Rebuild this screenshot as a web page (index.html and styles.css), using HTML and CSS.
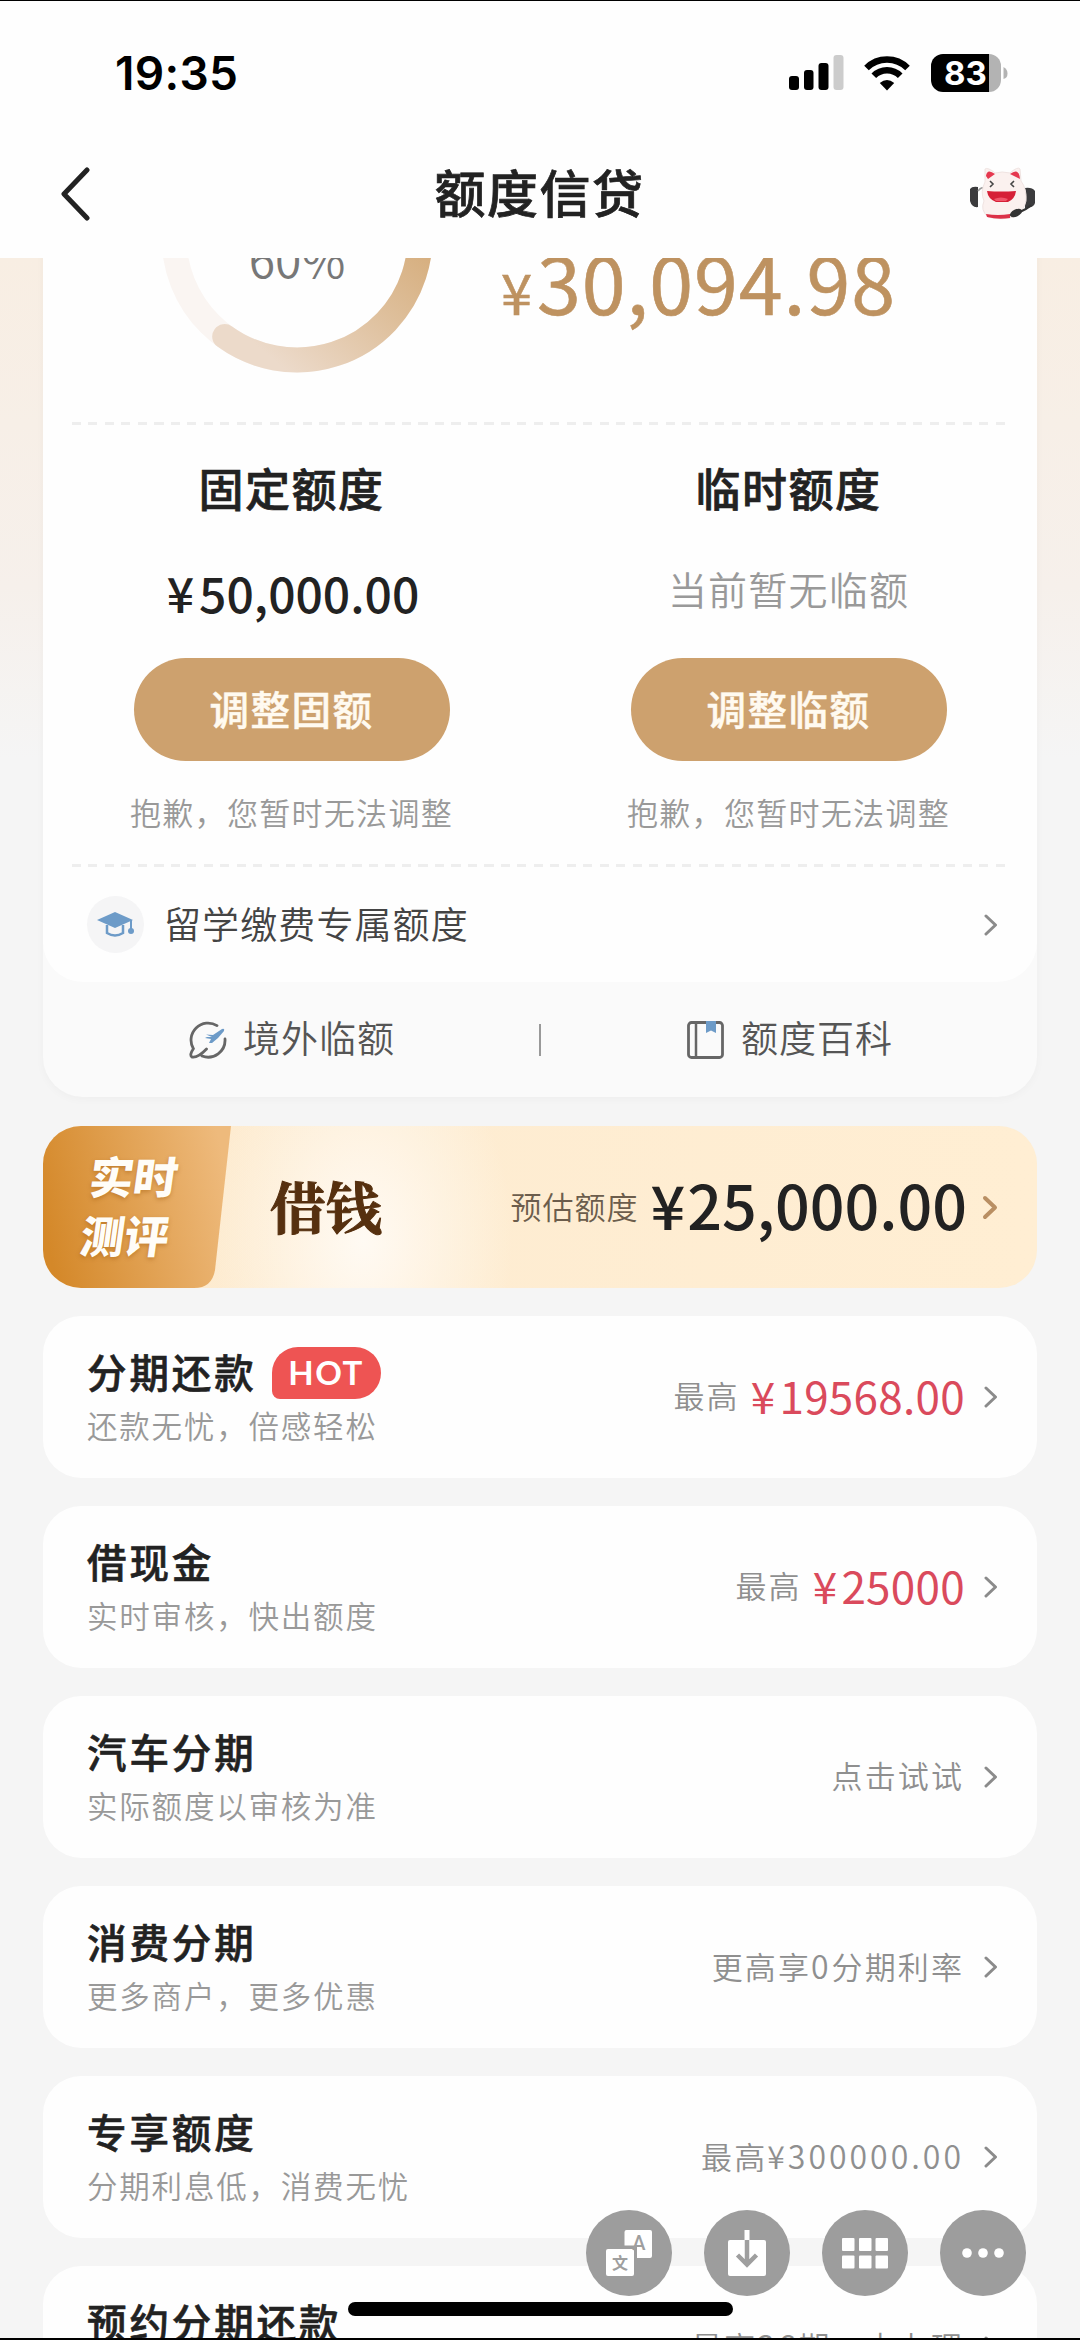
FILE: index.html
```html
<!DOCTYPE html>
<html lang="zh-CN">
<head>
<meta charset="utf-8">
<title>额度信贷</title>
<link rel="stylesheet" href="styles.css">
</head>
<body>
<svg width="0" height="0" class="defs">
  <symbol id="chevron" viewBox="0 0 14 22"><path d="M2 2 L11.5 11 L2 20" fill="none" stroke="currentColor" stroke-width="3" stroke-linecap="round" stroke-linejoin="round"/></symbol>
</svg>
<div class="screen">
  <header class="top">
    <div class="status">
      <span class="time">19:35</span>
      <div class="status-icons">
        <svg width="55" height="36" viewBox="0 0 55 36">
          <rect x="0" y="21" width="10" height="14" rx="3"/><rect x="15" y="15" width="9.500" height="20" rx="3"/><rect x="29.500" y="8" width="10" height="27" rx="3"/><rect x="44.500" y="0" width="10" height="35" rx="3" fill="#ccc"/>
        </svg>
        <svg class="wifi" width="46" height="36" viewBox="0 0 46 36">
          <path d="M2.500 13 A29 29 0 0 1 43.500 13" fill="none" stroke="#000" stroke-width="6.500"/>
          <path d="M9.800 20.800 A18.500 18.500 0 0 1 36.200 20.800" fill="none" stroke="#000" stroke-width="6.500"/>
          <path d="M23 35.500 L15.800 28 Q23 22 30.200 28 Z"/>
        </svg>
        <svg class="battery" width="77" height="38" viewBox="0 0 77 38">
          <path d="M12 0H58V38H12A12 12 0 0 1 0 26V12A12 12 0 0 1 12 0Z"/>
          <path d="M58 0A12 12 0 0 1 70 12V26A12 12 0 0 1 58 38Z" fill="#b3b3b3"/>
          <path d="M72.500 13Q76.500 15 76.500 19.500T72.500 25Z" fill="#b3b3b3"/>
          <text x="34.500" y="31" text-anchor="middle" class="battery-text">83</text>
        </svg>
      </div>
    </div>
    <nav class="nav">
      <svg class="back" width="32" height="54" viewBox="0 0 32 54"><path d="M28 3 L5 27 L28 51" fill="none" stroke="#222" stroke-width="5" stroke-linecap="round" stroke-linejoin="round"/></svg>
      <h1>额度信贷</h1>
      <svg class="mascot" width="66" height="54" viewBox="0 0 66 54">
        <path d="M0 22Q2 19 8 20V40Q2 41 0 34ZM55 21Q62 20 65 24V36Q64 41 55 41Z" fill="#3b3b3d"/>
        <path d="M8 24Q12 19 14 22L15 28M55 24L50 22" stroke="#999" stroke-width="1.500" fill="none"/>
        <path d="M15 2Q18 0 25 6Q32 4 40 6Q48-1 50 2L51 14Q57 22 56 34Q54 43 47 49Q32 54 18 50Q10 43 14 34Q10 25 15 15Z" fill="#fbf1ef" stroke="#f0e4e2" stroke-width="1"/>
        <path d="M16 9Q17 1 25 7L18 12ZM40 7Q49 0 50 12Z" fill="#e5384f"/>
        <path d="M20 14L23 17L20 20M44 14L41 17L44 20" fill="none" stroke="#444" stroke-width="1.600"/>
        <path d="M17 24Q31 25 46 24Q45 32 38 35H26Q18 32 17 24Z" fill="#d62037"/><path d="M24 32Q31 29 38 32L36 34H26Z" fill="#f0566a"/>
        <path d="M16 47Q28 49 40 47V51Q28 53 17 50Z" fill="#dc3148"/>
        <path d="M61 38Q56 43 49 45" fill="none" stroke="#333" stroke-width="2.200"/><ellipse cx="46" cy="46" rx="6.500" ry="3.600" transform="rotate(-25 46 46)" fill="#333"/>
      </svg>
    </nav>
  </header>

  <main class="page">
    <section class="quota">
      <div class="quota-main">
        <div class="summary">
          <svg class="ring" width="272" height="272" viewBox="0 0 272 272">
            <defs><linearGradient id="arc" x1="0.800" y1="0.200" x2="0.250" y2="1"><stop offset="0" stop-color="#d2a670"/><stop offset="0.500" stop-color="#debf9b"/><stop offset="1" stop-color="#ecdaca"/></linearGradient></defs>
            <circle cx="136" cy="136" r="123" fill="none" stroke="#faf5f2" stroke-width="25"/>
            <path d="M136 13 A123 123 0 1 1 63.700 235.500" fill="none" stroke="url(#arc)" stroke-width="25" stroke-linecap="round"/>
            <text x="136" y="177" text-anchor="middle" class="ring-text">60%</text>
          </svg>
          <div class="available"><small>¥</small>30,094.98</div>
        </div>
        <div class="dash"></div>
        <div class="limits">
          <div class="limit">
            <h2>固定额度</h2>
            <div class="value money"><i>¥</i>50,000.00</div>
            <button>调整固额</button>
            <p>抱歉，您暂时无法调整</p>
          </div>
          <div class="limit">
            <h2>临时额度</h2>
            <div class="value empty">当前暂无临额</div>
            <button>调整临额</button>
            <p>抱歉，您暂时无法调整</p>
          </div>
        </div>
        <div class="dash"></div>
        <a class="study">
          <span class="study-icon"><svg width="38" height="26" viewBox="0 0 38 26"><path d="M0 8L18 0L36 8L18 16Z" fill="#6d9bc8"/><path d="M10 13V21Q18 26 26 21V13" fill="none" stroke="#6d9bc8" stroke-width="2.500"/><path d="M34 8V18" stroke="#6d9bc8" stroke-width="2"/><circle cx="34" cy="19" r="3" fill="#6d9bc8"/></svg></span>
          <span class="study-text">留学缴费专属额度</span>
          <svg class="chev" width="14" height="22"><use href="#chevron"/></svg>
        </a>
      </div>
      <div class="quota-links">
        <a><svg width="38" height="38" viewBox="0 0 38 38"><path d="M28 4.600 A17 17 0 0 0 4.400 27.700 M36 18 A17 17 0 0 1 13 35 M4.400 27.700Q0 34 3 36Q9 37 17.500 28" fill="none" stroke="#666" stroke-width="2.800" stroke-linecap="round"/><path d="M17 13.500L24 14L33 8Q36 7 35 10L29 17L23 22H20L22 18L16 17L18 16H23Z" fill="#6d9bc8"/></svg><span>境外临额</span></a>
        <i></i>
        <a><svg width="38" height="38" viewBox="0 0 38 38"><rect x="1.500" y="1.500" width="34" height="35" rx="3" fill="none" stroke="#666" stroke-width="2.800"/><path d="M9 2V36" stroke="#666" stroke-width="2.500"/><path d="M19 0H29V12L24 9.500L19 12Z" fill="#6d9bc8"/></svg><span>额度百科</span></a>
      </div>
    </section>

    <a class="banner">
      <div class="tag">
        <svg class="tag-bg" width="188" height="162" viewBox="0 0 188 162"><defs><linearGradient id="tag" x1="0" y1="0.600" x2="1" y2="0.400"><stop offset="0" stop-color="#d48829"/><stop offset="1" stop-color="#eeba7c"/></linearGradient></defs><path d="M0 0H188L172 144Q169 162 151 162H0Z" fill="url(#tag)"/></svg>
        <span>实时</span><span>测评</span>
      </div>
      <strong>借钱</strong>
      <span class="estimate">预估额度</span>
      <span class="estimate-value"><i>¥</i>25,000.00</span>
      <svg class="chev gold" width="16" height="25" viewBox="0 0 16 25"><path d="M3 3L13 12.500L3 22" fill="none" stroke="currentColor" stroke-width="4" stroke-linecap="round" stroke-linejoin="round"/></svg>
    </a>

    <a class="item">
      <div class="item-text"><h3>分期还款<b>HOT</b></h3><p>还款无忧，倍感轻松</p></div>
      <span class="hint">最高</span><span class="price"><i>¥</i>19568.00</span>
      <svg class="chev" width="14" height="22"><use href="#chevron"/></svg>
    </a>
    <a class="item">
      <div class="item-text"><h3>借现金</h3><p>实时审核，快出额度</p></div>
      <span class="hint">最高</span><span class="price"><i>¥</i>25000</span>
      <svg class="chev" width="14" height="22"><use href="#chevron"/></svg>
    </a>
    <a class="item">
      <div class="item-text"><h3>汽车分期</h3><p>实际额度以审核为准</p></div>
      <span class="hint">点击试试</span>
      <svg class="chev" width="14" height="22"><use href="#chevron"/></svg>
    </a>
    <a class="item">
      <div class="item-text"><h3>消费分期</h3><p>更多商户，更多优惠</p></div>
      <span class="hint">更高享<span class="digits">0</span>分期利率</span>
      <svg class="chev" width="14" height="22"><use href="#chevron"/></svg>
    </a>
    <a class="item">
      <div class="item-text"><h3>专享额度</h3><p>分期利息低，消费无忧</p></div>
      <span class="hint">最高<span class="digits">¥300000.00</span></span>
      <svg class="chev" width="14" height="22"><use href="#chevron"/></svg>
    </a>
    <a class="item">
      <div class="item-text"><h3>预约分期还款</h3></div>
      <span class="hint">最高<span class="digits">36</span>期，去办理</span>
      <svg class="chev" width="14" height="22"><use href="#chevron"/></svg>
    </a>
  </main>

  <div class="tools">
    <button><svg width="46" height="46" viewBox="0 0 46 46"><path d="M20.500 0H44Q46 0 46 2V26Q46 28 44 28H31V17Q31 15.500 29 15.500H18.500V2Q18.500 0 20.500 0Z" fill="#fff"/><rect x="0" y="19" width="28" height="27" rx="2" fill="#fff"/><text x="33" y="20" text-anchor="middle" class="glyph-a">A</text><text x="14" y="38.500" text-anchor="middle" class="glyph-w">文</text></svg></button>
    <button><svg width="38" height="46" viewBox="0 0 38 46"><rect x="0" y="10" width="38" height="36" rx="2" fill="#fff"/><path d="M19 0V10" stroke="#fff" stroke-width="5"/><path d="M19 10V33M9.500 25L19 34.500L28.500 25" stroke="#9f9f9f" stroke-width="4.500" fill="none"/></svg></button>
    <button><svg width="46" height="31" viewBox="0 0 46 31" fill="#fff"><rect width="12.500" height="13" rx="1"/><rect x="17" width="12.500" height="13" rx="1"/><rect x="33.500" width="12.500" height="13" rx="1"/><rect y="17.500" width="12.500" height="13" rx="1"/><rect x="17" y="17.500" width="12.500" height="13" rx="1"/><rect x="33.500" y="17.500" width="12.500" height="13" rx="1"/></svg></button>
    <button><svg width="42" height="10" viewBox="0 0 42 10" fill="#fff"><circle cx="5" cy="5" r="4.800"/><circle cx="21" cy="5" r="4.800"/><circle cx="37" cy="5" r="4.800"/></svg></button>
  </div>
  <div class="home"></div>
</div>
</body>
</html>
```
FILE: styles.css
```css
* { box-sizing: border-box; margin: 0; padding: 0; }
body { font-family: "Noto Sans CJK SC", sans-serif; color: #222; background: #f5f5f5; }
svg { display: block; flex: none; }
i { font-style: normal; }
.defs { position: absolute; }
button { border: 0; font: inherit; }
.screen { position: relative; width: 1080px; height: 2340px; overflow: hidden; border-top: 1px solid #000; border-bottom: 2px solid #000; }

.top { position: relative; z-index: 2; height: 257px; background: #fefefe; }
.status { display: flex; align-items: center; justify-content: space-between; height: 143px; padding: 0 72px 0 115px; }
.time { font: 600 46px/60px Inter, sans-serif; color: #000; letter-spacing: 0.3px; }
.status-icons { display: flex; align-items: center; }
.wifi { margin-left: 20px; }
.battery { margin-left: 21px; }
.battery-text { font: 700 33px Inter, sans-serif; fill: #fff; }
.nav { display: flex; align-items: center; justify-content: space-between; height: 100px; padding: 0 44px 0 59px; }
.nav h1 { font-size: 51px; font-weight: 500; line-height: 70px; letter-spacing: 1.500px; margin: -6px 0 0 18px; -webkit-text-stroke: 0.700px; }

.page { display: flex; flex-direction: column; height: 2080px; padding: 0 43px; overflow: hidden; background: linear-gradient(#f8eee3, #f6f0eb 330px, #f5f5f5 500px); }
.quota { flex: none; margin-top: -160px; height: 999px; border-radius: 40px; background: #fafafa; box-shadow: 0 2px 10px rgba(0,0,0,.03); }
.quota-main { height: 884px; border-radius: 0 0 40px 40px; background: #fefefe; }
.summary { display: flex; height: 324px; padding: 3px 0 0 118px; }
.ring-text { font: 350 48px "Noto Sans CJK SC", sans-serif; fill: #777; }
.available { margin: 135px 0 0 68px; font-size: 79px; line-height: 90px; letter-spacing: 0.900px; color: #be9260; white-space: nowrap; -webkit-text-stroke: 0.600px; }
.available small { font-size: 56px; margin-right: 4px; }
.dash { height: 3px; margin: 0 29px; background: repeating-linear-gradient(90deg, #eee 0 9px, transparent 9px 16.500px); }
.limits { display: grid; grid-template-columns: 1fr 1fr; height: 439px; }
.limit { display: flex; flex-direction: column; align-items: center; padding-top: 33px; }
.limit h2 { font-size: 45px; font-weight: 500; line-height: 60px; letter-spacing: 1.500px; -webkit-text-stroke: 0.700px; }
.value { height: 140px; line-height: 140px; }
.money { padding: 4px 0 0 3px; font-size: 48px; font-weight: 500; }
.money i { margin-right: 5px; }
.empty { font-size: 39px; font-weight: 350; color: #999; letter-spacing: 1.200px; }
.limit button { width: 316px; height: 103px; border-radius: 52px; background: #cda16e; color: #fffaf0; font-size: 39.500px; font-weight: 500; line-height: 99px; letter-spacing: 1.500px; padding-bottom: 4px; -webkit-text-stroke: 0.500px; }
.limit p { font-size: 31px; font-weight: 350; line-height: 101px; letter-spacing: 1.300px; color: #999; }
.study { display: flex; align-items: center; height: 115px; padding: 0 39px 0 44px; }
.study-icon { display: grid; place-items: center; width: 57px; height: 57px; border-radius: 50%; background: #f5f5f6; }
.study-text { flex: 1; margin: -4px 0 0 20px; font-size: 37px; line-height: 60px; letter-spacing: 1.100px; font-weight: 350; color: #444; }
.chev { color: #8b8b8b; }
.quota-links { display: flex; align-items: center; height: 115px; }
.quota-links a { flex: 1; display: flex; align-items: center; justify-content: center; gap: 16px; padding-left: 2px; }
.quota-links span { font-size: 37px; font-weight: 350; line-height: 60px; letter-spacing: 1px; color: #555; margin-top: -5px; }
.quota-links i { width: 2px; height: 32px; background: #999; }

.banner, .item { flex: none; display: flex; align-items: center; height: 162px; border-radius: 38px; overflow: hidden; padding-right: 39px; }
.banner { margin: 29px 0 28px; background: radial-gradient(ellipse 150px 220px at 320px 70%, #fffaf3, rgba(255,245,230,0)), linear-gradient(90deg, #fdebd0, #ffeed3); }
.tag { position: relative; width: 188px; height: 162px; padding-top: 20px; }
.tag-bg { position: absolute; inset: 0; }
.tag span { position: relative; display: block; margin-left: 47px; font-size: 44px; font-weight: 900; line-height: 59px; color: #fffdf8; transform: skewX(-8deg); transform-origin: 0 50%; text-shadow: 0 2px 4px rgba(150,80,0,.4); }
.tag span + span { margin-left: 38px; }
.banner strong { flex: 1; margin: -5px 0 0 39px; font: 700 56px/80px "Noto Serif CJK SC", "Noto Sans CJK SC", serif; color: #56300f; -webkit-text-stroke: 1px; }
.estimate { font-size: 31px; font-weight: 350; letter-spacing: 1px; color: #6c5d4c; margin-top: -4px; }
.estimate-value { font-size: 61px; font-weight: 500; line-height: 80px; margin: -7px 15px 0 12px; }
.estimate-value i { margin-right: 2px; }
.gold { color: #b98f63; }

.item { background: #fefefe; margin-bottom: 28px; padding-left: 44px; }
.item-text { flex: 1; align-self: stretch; padding-top: 25px; }
.item h3 { display: flex; align-items: center; font-size: 39.500px; font-weight: 500; line-height: 60px; letter-spacing: 2.900px; -webkit-text-stroke: 0.600px; }
.item p { font-size: 30.500px; font-weight: 350; line-height: 48px; letter-spacing: 1.800px; color: #999; }
.item b { width: 109px; height: 52px; margin: 3px 0 0 15px; border-radius: 26px 26px 26px 8px; background: #ee5453; color: #fff; font: 700 33px/50px Lato, sans-serif; letter-spacing: 1.500px; text-align: center; -webkit-text-stroke: 0; }
.hint { font-size: 31px; font-weight: 350; letter-spacing: 2.100px; color: #8f8f8f; margin-right: 20px; margin-top: -5px; white-space: nowrap; }
.digits { font-size: 32px; letter-spacing: 3px; }
.price { font-size: 44px; line-height: 60px; color: #da4a5c; margin: -5px 19px 0 -9px; letter-spacing: 0.300px; white-space: nowrap; }
.price i { margin-right: 4px; }

.tools { position: absolute; left: 586px; top: 2209px; display: flex; gap: 32px; z-index: 3; }
.tools button { display: grid; place-items: center; width: 86px; height: 86px; border-radius: 50%; background: rgba(150,150,150,.93); }
.glyph-a { font: 500 20px Roboto, sans-serif; fill: #9f9f9f; }
.glyph-w { font: 700 16px "Noto Sans CJK SC", sans-serif; fill: #9f9f9f; }
.home { position: absolute; left: 348px; top: 2301px; width: 385px; height: 14px; border-radius: 7px; background: #000; z-index: 3; }
```
